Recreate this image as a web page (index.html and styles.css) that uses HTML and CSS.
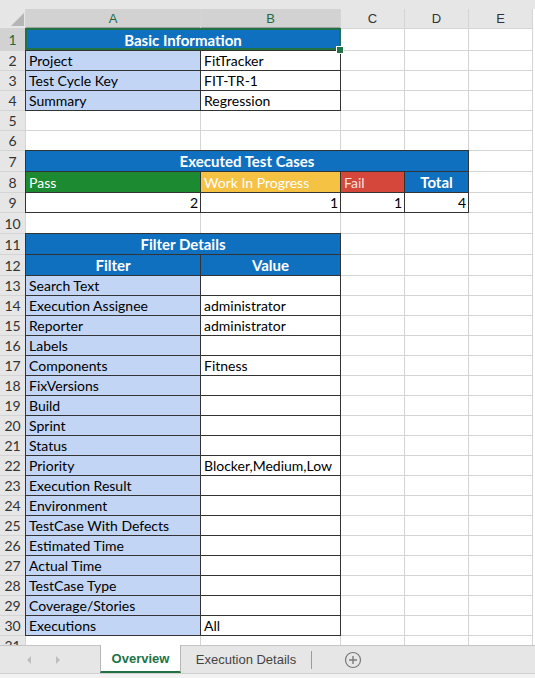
FILE: index.html
```html
<!DOCTYPE html>
<html lang="en">
<head>
    <meta charset="UTF-8">
    <meta name="viewport" content="width=device-width, initial-scale=1.0">
    <title>Test Cycle Report</title>
    <link rel="stylesheet" href="styles.css">
</head>
<body>
    <div class="topbar"></div>
    <div class="sheet">
        <div class="corner"><span class="tri"></span></div><div class="ch on">A</div><div class="ch on">B</div><div class="ch">C</div><div class="ch">D</div><div class="ch">E</div>

        <div class="rh on">1</div><div class="c hd b sel span2">Basic Information</div><div class="c"></div><div class="c"></div><div class="c"></div>
        <div class="rh">2</div><div class="c lb b">Project</div><div class="c b">FitTracker</div><div class="c"></div><div class="c"></div><div class="c"></div>
        <div class="rh">3</div><div class="c lb b">Test Cycle Key</div><div class="c b">FIT-TR-1</div><div class="c"></div><div class="c"></div><div class="c"></div>
        <div class="rh">4</div><div class="c lb b">Summary</div><div class="c b">Regression</div><div class="c"></div><div class="c"></div><div class="c"></div>
        <div class="rh">5</div><div class="c"></div><div class="c"></div><div class="c"></div><div class="c"></div><div class="c"></div>
        <div class="rh">6</div><div class="c"></div><div class="c"></div><div class="c"></div><div class="c"></div><div class="c"></div>
        <div class="rh">7</div><div class="c hd b span4">Executed Test Cases</div><div class="c"></div>
        <div class="rh">8</div><div class="c pass b">Pass</div><div class="c wip b">Work In Progress</div><div class="c fail b">Fail</div><div class="c hd b">Total</div><div class="c"></div>
        <div class="rh">9</div><div class="c num b">2</div><div class="c num b">1</div><div class="c num b">1</div><div class="c num b">4</div><div class="c"></div>
        <div class="rh">10</div><div class="c"></div><div class="c"></div><div class="c"></div><div class="c"></div><div class="c"></div>
        <div class="rh">11</div><div class="c hd b span2">Filter Details</div><div class="c"></div><div class="c"></div><div class="c"></div>
        <div class="rh">12</div><div class="c hd b">Filter</div><div class="c hd b">Value</div><div class="c"></div><div class="c"></div><div class="c"></div>
        <div class="rh">13</div><div class="c lb b">Search Text</div><div class="c b"></div><div class="c"></div><div class="c"></div><div class="c"></div>
        <div class="rh">14</div><div class="c lb b">Execution Assignee</div><div class="c b">administrator</div><div class="c"></div><div class="c"></div><div class="c"></div>
        <div class="rh">15</div><div class="c lb b">Reporter</div><div class="c b">administrator</div><div class="c"></div><div class="c"></div><div class="c"></div>
        <div class="rh">16</div><div class="c lb b">Labels</div><div class="c b"></div><div class="c"></div><div class="c"></div><div class="c"></div>
        <div class="rh">17</div><div class="c lb b">Components</div><div class="c b">Fitness</div><div class="c"></div><div class="c"></div><div class="c"></div>
        <div class="rh">18</div><div class="c lb b">FixVersions</div><div class="c b"></div><div class="c"></div><div class="c"></div><div class="c"></div>
        <div class="rh">19</div><div class="c lb b">Build</div><div class="c b"></div><div class="c"></div><div class="c"></div><div class="c"></div>
        <div class="rh">20</div><div class="c lb b">Sprint</div><div class="c b"></div><div class="c"></div><div class="c"></div><div class="c"></div>
        <div class="rh">21</div><div class="c lb b">Status</div><div class="c b"></div><div class="c"></div><div class="c"></div><div class="c"></div>
        <div class="rh">22</div><div class="c lb b">Priority</div><div class="c b">Blocker,Medium,Low</div><div class="c"></div><div class="c"></div><div class="c"></div>
        <div class="rh">23</div><div class="c lb b">Execution Result</div><div class="c b"></div><div class="c"></div><div class="c"></div><div class="c"></div>
        <div class="rh">24</div><div class="c lb b">Environment</div><div class="c b"></div><div class="c"></div><div class="c"></div><div class="c"></div>
        <div class="rh">25</div><div class="c lb b">TestCase With Defects</div><div class="c b"></div><div class="c"></div><div class="c"></div><div class="c"></div>
        <div class="rh">26</div><div class="c lb b">Estimated Time</div><div class="c b"></div><div class="c"></div><div class="c"></div><div class="c"></div>
        <div class="rh">27</div><div class="c lb b">Actual Time</div><div class="c b"></div><div class="c"></div><div class="c"></div><div class="c"></div>
        <div class="rh">28</div><div class="c lb b">TestCase Type</div><div class="c b"></div><div class="c"></div><div class="c"></div><div class="c"></div>
        <div class="rh">29</div><div class="c lb b">Coverage/Stories</div><div class="c b"></div><div class="c"></div><div class="c"></div><div class="c"></div>
        <div class="rh">30</div><div class="c lb b">Executions</div><div class="c b">All</div><div class="c"></div><div class="c"></div><div class="c"></div>
        <div class="rh">31</div><div class="c"></div><div class="c"></div><div class="c"></div><div class="c"></div><div class="c"></div>
    </div>
    <div class="tabs">
        <div class="nav"><span class="arr prev"></span><span class="arr next"></span></div>
        <div class="tab on">Overview</div>
        <div class="tab">Execution Details</div>
        <span class="sep"></span>
        <div class="add">
            <svg width="18" height="18" viewBox="0 0 18 18"><circle cx="9" cy="9" r="7.5" fill="none" stroke="#7a7a7a" stroke-width="1.2"/><path d="M9 5v8M5 9h8" stroke="#7a7a7a" stroke-width="1.4"/></svg>
        </div>
    </div>
    <div class="bottombar"></div>
</body>
</html>
```

FILE: styles.css
```css
* { margin:0; padding:0; box-sizing:border-box;}
body { background:#fff; font-family:Lato, "Liberation Sans", Arial, sans-serif; font-size:14px; color:#000; width:535px; height:678px; overflow:hidden;}

.topbar { height:9px; background:#e6e6e6;}

/* sheet grid : gap = gridline */
.sheet { display:grid; grid-template-columns:25px 174px 139px 63px 63px 63px; grid-template-rows:19px 21px repeat(5,19px) 20px 20px 19px 20px 20px 20px repeat(18,19px) 19px; gap:1px; background:#d4d4d4; padding-right:1px; width:533px; height:636px; overflow:hidden;}

.corner { background:#e6e6e6; display:flex; justify-content:flex-end; align-items:flex-end; padding:0 1px 2px 0;}
.corner .tri { width:0; height:0; border-left:13px solid transparent; border-bottom:13px solid #b5b5b5;}
.ch { background:#e6e6e6; color:#333; font-family:"Liberation Sans", Arial, sans-serif; font-size:13px; display:flex; justify-content:center; align-items:center;}
.ch.on { background:#d2d2d2; color:#1e6b3f; box-shadow:inset 0 -1px 0 #a0a0a0;}
.rh { background:#e6e6e6; color:#333; font-size:14px; display:flex; justify-content:center; align-items:center;}
.rh.on { background:#d2d2d2; color:#1e6b3f;}

.c { background:#fff; padding:0 3px; display:flex; align-items:center; white-space:nowrap; overflow:hidden; position:relative;}
.b { outline:1px solid #333;}
.span2 { grid-column:span 2;}
.span4 { grid-column:span 4;}
.hd { background:#1070c0; color:#fff; font-weight:bold; font-size:15px; justify-content:center;}
.lb { background:#c2d5f5;}
.pass { background:#1b8a30; color:#fff;}
.wip { background:#f6c244; color:#fff;}
.fail { background:#d4473a; color:#fbe3e0;}
.num { justify-content:flex-end; padding-right:2px;}

.sel { overflow:visible;}
.sel::after { content:""; position:absolute; left:-1px; top:-1px; right:-1px; bottom:0; border:2px solid #217346; z-index:2;}
.sel::before { content:""; position:absolute; right:-4px; bottom:-4px; width:6px; height:6px; background:#217346; border:1px solid #fff; z-index:3;}

/* sheet tabs */
.tabs { height:28px; background:#e6e6e6; border-top:1px solid #c4c4c4; display:flex; align-items:stretch; font-family:"Liberation Sans", Arial, sans-serif; font-size:13px;}
.nav { width:100px; display:flex; align-items:center; padding-left:27px; gap:25px;}
.arr { width:0; height:0; border-top:4px solid transparent; border-bottom:4px solid transparent;}
.arr.prev { border-right:4px solid #bdbdbd;}
.arr.next { border-left:4px solid #bdbdbd;}
.tab { display:flex; align-items:center; justify-content:center; color:#444;}
.tab.on { width:81px; background:#fff; color:#217346; font-weight:bold; border-left:1px solid #b8b8b8; border-right:1px solid #b8b8b8; border-bottom:2px solid #217346; margin-top:-1px; padding-top:1px;}
.tab:nth-child(3) { width:130px;}
.sep { width:1px; background:#9c9c9c; margin:5px 0 4px;}
.add { display:flex; align-items:center; margin-left:32px;}

.bottombar { height:5px; background:#f2f2f2; border-top:1px solid #d0d0d0;}
```
